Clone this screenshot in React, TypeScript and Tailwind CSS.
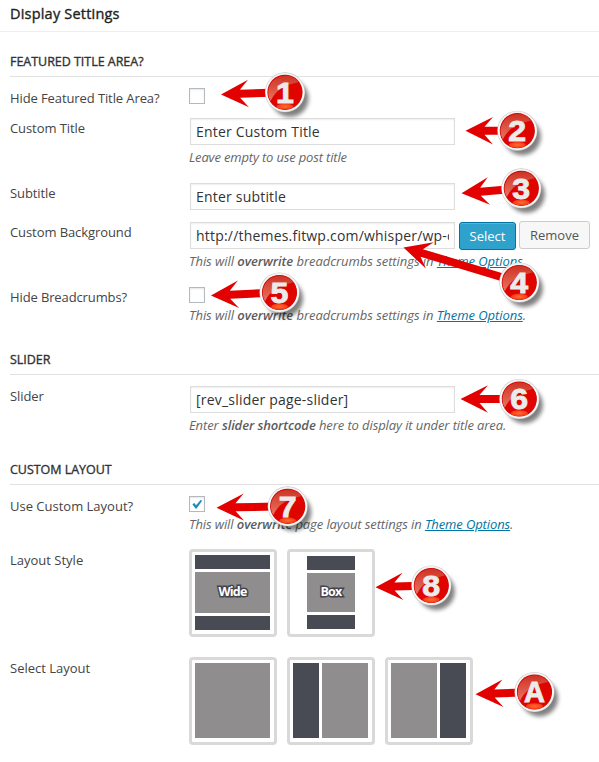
import type { ReactNode } from "react";

type Callout = { id: string; x: number; y: number; tipX: number; tipY: number };

const callouts: Callout[] = [
  { id: "1", x: 285, y: 92.3, tipX: 221, tipY: 94.5 },
  { id: "2", x: 517.3, y: 130.7, tipX: 465.5, tipY: 130.7 },
  { id: "3", x: 521.3, y: 188.3, tipX: 461.5, tipY: 193.3 },
  { id: "4", x: 519.3, y: 282.5, tipX: 403.5, tipY: 247.5 },
  { id: "5", x: 279.5, y: 292.5, tipX: 211, tipY: 295.5 },
  { id: "6", x: 519.3, y: 399, tipX: 460.5, tipY: 399 },
  { id: "7", x: 287.7, y: 506.3, tipX: 216.5, tipY: 507.7 },
  { id: "8", x: 431.3, y: 585.5, tipX: 375.5, tipY: 587.2 },
  { id: "A", x: 534.5, y: 692, tipX: 475.5, tipY: 694.3 },
];

function CalloutMark({ id, x, y, tipX, tipY }: Callout) {
  const dx = x - tipX;
  const dy = y - tipY;
  const length = Math.hypot(dx, dy);
  const angle = (Math.atan2(dy, dx) * 180) / Math.PI;
  return (
    <g>
      <path
        transform={`translate(${tipX} ${tipY}) rotate(${angle})`}
        d={`M0 0L27.5 -13.7L19 -4H${length}V4H19L27.5 13.7Z`}
        fill="#e20000"
      />
      <g transform={`translate(${x} ${y})`}>
        <circle cx="5" cy="6" r="18.5" fill="#000" opacity=".5" filter="url(#soft)" />
        <circle r="20" fill="#c9c9c9" />
        <circle r="19.4" fill="url(#ring)" />
        <circle r="17.6" fill="#c51212" />
        <circle r="17" fill="#df0400" />
        <path d="M-14.5 8.8A17 17 0 0 1 13.5 -10.3C8 -8 -6 -8 -14.5 8.8Z" fill="url(#gloss)" />
        <ellipse cx="0" cy="14.2" rx="8.4" ry="3" fill="url(#glow)" />
        <text
          transform={id === "A" ? undefined : "scale(1.07 1)"}
          y={id === "A" ? 10.3 : 10.4}
          textAnchor="middle"
          fontFamily="Liberation Sans, sans-serif"
          fontWeight="700"
          fontSize={id === "A" ? 29 : 30}
          fill="#ebebeb"
          stroke="#ebebeb"
          strokeWidth=".9"
        >
          {id}
        </text>
      </g>
    </g>
  );
}

function SectionTitle({ children, className }: { children: string; className: string }) {
  return (
    <h4 className={`ml-[10px] flex items-end border-b border-[#e1e1e1] pb-[5px] text-[12.5px] leading-[18px] tracking-[-0.03px] font-normal text-[#333] [-webkit-text-stroke:0.35px_#333] ${className}`}>
      {children}
    </h4>
  );
}

function Row({ label, className, labelClass = "tracking-[-0.08px]", children }: { label: string; className: string; labelClass?: string; children: ReactNode }) {
  return (
    <div className={`flex pl-[10px] ${className}`}>
      <div className={`w-[179px] shrink-0 text-[13px] leading-5 text-[#444] ${labelClass}`}>{label}</div>
      <div className="shrink-0">{children}</div>
    </div>
  );
}

function Field({ value }: { value: string }) {
  return (
    <div className="ml-px h-[27px] w-[265px] border border-[#ddd] bg-white pr-[5px] pl-[5px] text-[14px] leading-[25px] tracking-[0.2px] text-[#333] shadow-[inset_0_1px_2px_rgba(0,0,0,0.07)]">
      <div className="overflow-hidden whitespace-nowrap">{value}</div>
    </div>
  );
}

function Check({ checked = false }: { checked?: boolean }) {
  return (
    <div className="h-4 w-4 border border-[#b4b9be] bg-white shadow-[inset_0_1px_2px_rgba(0,0,0,0.1)]">
      {checked && (
        <svg viewBox="0 0 14 14" className="block h-[14px] w-[14px]">
          <path d="M2.4 7.2L4.3 5.9L6.1 8.3L10.6 2.9L12.2 3.7L6.6 11.5H5.4Z" fill="#1e8cbe" />
        </svg>
      )}
    </div>
  );
}

function Hint({ children, className = "tracking-[-0.05px]" }: { children: ReactNode; className?: string }) {
  return <p className={`mt-[3px] text-[13px] leading-[18px] whitespace-nowrap text-[#666] italic ${className}`}>{children}</p>;
}

function Strong({ children }: { children: string }) {
  return <b className="font-semibold text-[#5c5c5c]">{children}</b>;
}

function OptionsLink() {
  return <a className="text-[#0074a2] underline">Theme Options</a>;
}

function Thumb({ children }: { children: ReactNode }) {
  return <div className="h-[88px] w-[88px] rounded-[4px] border-3 border-[#d9d9d9] bg-white p-[3px]">{children}</div>;
}

function ThumbLabel({ children }: { children: string }) {
  return (
    <span className="font-['Open_Sans',sans-serif] text-[12.5px] font-bold tracking-[-0.8px] text-white [paint-order:stroke_fill] [-webkit-text-stroke:3px_#42454e]">
      {children}
    </span>
  );
}

export default function App() {
  return (
    <div className="relative h-[762px] w-[599px] overflow-hidden bg-white font-['Open_Sans',sans-serif]">
      <h3 className="h-8 border-b border-[#eee] pl-[10px] text-[14.5px] leading-[28px] font-normal tracking-[0.2px] text-[#222] [-webkit-text-stroke:0.35px_#222]">
        Display Settings
      </h3>

      <SectionTitle className="h-[45px]">FEATURED TITLE AREA?</SectionTitle>
      <Row label="Hide Featured Title Area?" className="mt-[11px] h-[30px]" labelClass="tracking-[-0.1px]">
        <Check />
      </Row>
      <Row label="Custom Title" className="h-[65px]">
        <Field value="Enter Custom Title" />
        <Hint className="tracking-[-0.16px]">Leave empty to use post title</Hint>
      </Row>
      <Row label="Subtitle" className="h-[39px]">
        <Field value="Enter subtitle" />
      </Row>
      <Row label="Custom Background" className="h-[65px]">
        <div className="flex h-[27px]">
          <Field value="http://themes.fitwp.com/whisper/wp-content" />
          <div className="ml-1 h-7 w-[57px] rounded-[3px] border border-[#0074a2] bg-[#2ea2cc] text-center text-[13px] leading-[27px] text-white shadow-[inset_0_1px_0_rgba(120,200,230,0.5)]">
            Select
          </div>
          <div className="-mt-px ml-[3px] h-7 w-[71px] rounded-[3px] border border-[#ccc] bg-[#f7f7f7] text-center text-[13px] leading-[27px] text-[#555]">
            Remove
          </div>
        </div>
        <Hint>
          This will <Strong>overwrite</Strong> breadcrumbs settings in <OptionsLink />.
        </Hint>
      </Row>
      <Row label="Hide Breadcrumbs?" className="h-[43px]" labelClass="tracking-[-0.12px]">
        <Check />
        <Hint>
          This will <Strong>overwrite</Strong> breadcrumbs settings in <OptionsLink />.
        </Hint>
      </Row>

      <SectionTitle className="h-[45px]">SLIDER</SectionTitle>
      <Row label="Slider" className="mt-[11px] h-[54px]">
        <Field value="[rev_slider page-slider]" />
        <Hint className="tracking-[-0.1px]">
          Enter <Strong>slider shortcode</Strong> here to display it under title area.
        </Hint>
      </Row>

      <SectionTitle className="h-[45px]">CUSTOM LAYOUT</SectionTitle>
      <Row label="Use Custom Layout?" className="mt-[11px] h-[53px]" labelClass="tracking-normal">
        <Check checked />
        <Hint className="tracking-[-0.1px]">
          This will <Strong>overwrite</Strong> page layout settings in <OptionsLink />.
        </Hint>
      </Row>
      <Row label="Layout Style" className="h-[108px]" labelClass="pt-px tracking-normal">
        <div className="flex gap-[10px]">
          <Thumb>
            <div className="flex h-[75px] flex-col gap-[3px] pr-px">
              <div className="h-[14px] bg-[#484b54]" />
              <div className="flex flex-1 items-center justify-center bg-[#8f8d8e]">
                <ThumbLabel>Wide</ThumbLabel>
              </div>
              <div className="h-[14px] bg-[#484b54]" />
            </div>
          </Thumb>
          <Thumb>
            <div className="mt-px ml-[14px] flex h-[73px] w-12 flex-col gap-[3px]">
              <div className="h-[14px] bg-[#484b54]" />
              <div className="flex flex-1 items-center justify-center bg-[#8f8d8e]">
                <ThumbLabel>Box</ThumbLabel>
              </div>
              <div className="h-[14px] bg-[#484b54]" />
            </div>
          </Thumb>
        </div>
      </Row>
      <Row label="Select Layout" className="h-[88px]" labelClass="pt-px tracking-normal">
        <div className="flex gap-[10px]">
          <Thumb>
            <div className="mr-px h-[75px] bg-[#8f8d8e]" />
          </Thumb>
          <Thumb>
            <div className="mr-px flex h-[75px] gap-[3px]">
              <div className="w-[26px] bg-[#484b54]" />
              <div className="flex-1 bg-[#8f8d8e]" />
            </div>
          </Thumb>
          <Thumb>
            <div className="mr-px flex h-[75px] gap-[3px]">
              <div className="flex-1 bg-[#8f8d8e]" />
              <div className="w-[26px] bg-[#484b54]" />
            </div>
          </Thumb>
        </div>
      </Row>

      <svg className="pointer-events-none absolute inset-0" width="599" height="762" viewBox="0 0 599 762">
        <defs>
          <filter id="soft" x="-30%" y="-30%" width="160%" height="160%">
            <feGaussianBlur stdDeviation="2" />
          </filter>
          <linearGradient id="ring" x1="0" y1="0" x2="0" y2="1">
            <stop offset="0" stopColor="#f2f2f2" />
            <stop offset=".5" stopColor="#fff" />
            <stop offset="1" stopColor="#f4f4f4" />
          </linearGradient>
          <linearGradient id="gloss" x1="0" y1="0" x2="0" y2="1">
            <stop offset="0" stopColor="#cf3325" />
            <stop offset="1" stopColor="#e9735f" />
          </linearGradient>
          <radialGradient id="glow">
            <stop offset="0" stopColor="#ff6a35" />
            <stop offset="1" stopColor="#f53a14" />
          </radialGradient>
        </defs>
        {callouts.map((c) => (
          <CalloutMark key={c.id} {...c} />
        ))}
      </svg>
    </div>
  );
}
